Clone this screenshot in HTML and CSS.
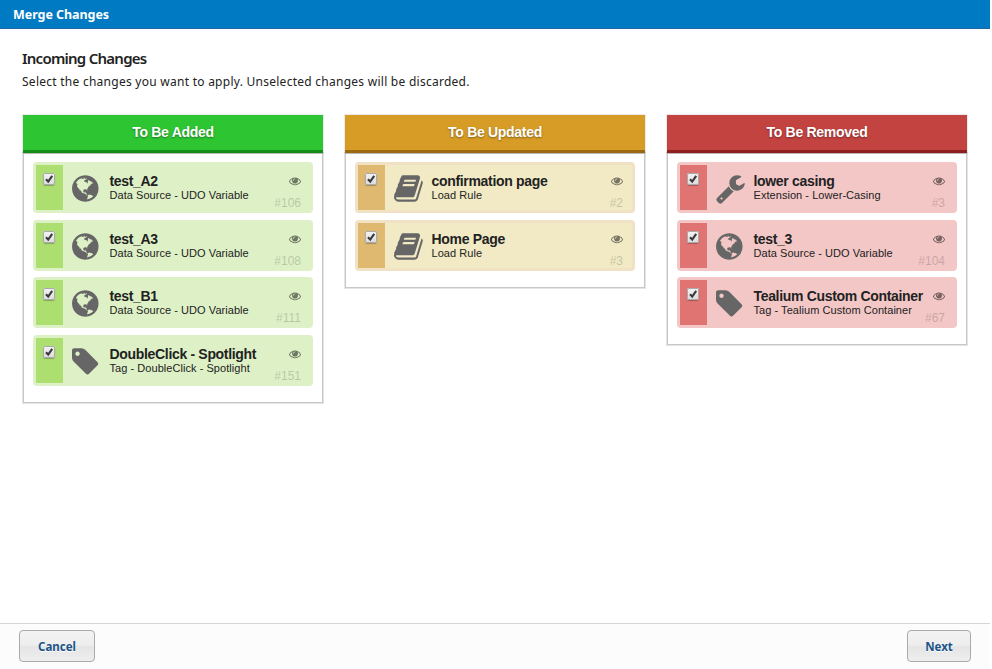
FILE: index.html
```
<!DOCTYPE html>
<html lang="en">
<head>
<meta charset="utf-8">
<title>Merge Changes</title>
<link rel="stylesheet" href="styles.css">
</head>
<body>
<svg class="sprite" width="0" height="0" aria-hidden="true">
  <symbol id="globe" viewBox="128 0 1792 1792"><path d="M896 128q209 0 385.5 103t279.5 279.5 103 385.5-103 385.5-279.5 279.5-385.5 103-385.5-103-279.5-279.5-103-385.5 103-385.5 279.5-279.5 385.5-103zm274 521q-2 1-9.5 9.5t-13.5 9.5q2 0 4.5-5t5-11 3.5-7q6-7 22-15 14-6 52-12 34-8 51 11-2-2 9.5-13t14.5-12q3-2 15-4.5t15-7.5l2-22q-12 1-17.5-7t-6.5-21q0 2-6 8 0-7-4.5-8t-11.5 1-9 1q-10-3-15-7.5t-8-16.5-4-15q-2-5-9.5-11t-9.5-10q-1-2-2.5-5.5t-3-6.5-4-5.5-5.5-2.5-7 5-7.5 10-4.5 5q-3-2-6-1.5t-4.5 1-4.5 3-5 3.5q-3 2-8.5 3t-8.5 2q15-5-1-11-10-4-16-3 9-4 7.5-12t-8.5-14h5q-1-4-8.5-8.5t-17.5-8.5-13-6q-8-5-34-9.5t-33-.5q-5 6-4.5 10.5t4 14 3.5 12.5q1 6-5.5 13t-6.5 12q0 7 14 15.5t10 21.5q-3 8-16 16t-16 12q-5 8-1.5 18.5t10.5 16.5q2 2 1.5 4t-3.5 4.5-5.5 4-6.5 3.5l-3 2q-11 5-20.5-6t-13.5-26q-7-25-16-30-23-8-29 1-5-13-41-26-25-9-58-4 6-1 0-15-7-15-19-12 3-6 4-17.5t1-13.5q3-13 12-23 1-1 7-8.5t9.5-13.5.5-6q35 4 50-11 5-5 11.5-17t10.5-17q9-6 14-5.5t14.5 5.5 14.5 5q14 1 15.5-11t-7.5-20q12 1 3-17-4-7-8-9-12-4-27 5-8 4 2 8-1-1-9.5 10.5t-16.5 17.5-16-5q-1-1-5.5-13.5t-9.5-13.5q-8 0-16 15 3-8-11-15t-24-8q19-12-8-27-7-4-20.5-5t-19.5 4q-5 7-5.5 11.5t5 8 10.5 5.5 11.5 4 8.5 3q14 10 8 14-2 1-8.5 3.5t-11.5 4.5-6 4q-3 4 0 14t-2 14q-5-5-9-17.5t-7-16.5q7 9-25 6l-10-1q-4 0-16 2t-20.5 1-13.5-8q-4-8 0-20 1-4 4-2-4-3-11-9.5t-10-8.5q-46 15-94 41 6 1 12-1 5-2 13-6.5t10-5.5q34-14 42-7l5-5q14 16 20 25-7-4-30-1-20 6-22 12 7 12 5 18-4-3-11.5-10t-14.5-11-15-5q-16 0-22 1-146 80-235 222 7 7 12 8 4 1 5 9t2.5 11 11.5-3q9 8 3 19 1-1 44 27 19 17 21 21 3 11-10 18-1-2-9-9t-9-4q-3 5 .5 18.5t10.5 12.5q-7 0-9.5 16t-2.5 35.5-1 23.5l2 1q-3 12 5.5 34.5t21.5 19.5q-13 3 20 43 6 8 8 9 3 2 12 7.5t15 10 10 10.5q4 5 10 22.5t14 23.5q-2 6 9.5 20t10.5 23q-1 0-2.5 1t-2.5 1q3 7 15.5 14t15.5 13q1 3 2 10t3 11 8 2q2-20-24-62-15-25-17-29-3-5-5.5-15.5t-4.5-14.5q2 0 6 1.5t8.5 3.5 7.5 4 2 3q-3 7 2 17.5t12 18.5 17 19 12 13q6 6 14 19.5t0 13.5q9 0 20 10.5t17 19.5q5 8 8 26t5 24q2 7 8.5 13.5t12.5 9.5l16 8 13 7q5 2 18.5 10.5t21.5 11.5q10 4 16 4t14.5-2.5 13.5-3.5q15-2 29 15t21 21q36 19 55 11-2 1 .5 7.5t8 15.5 9 14.5 5.5 8.5q5 6 18 15t18 15q6-4 7-9-3 8 7 20t18 10q14-3 14-32-31 15-49-18 0-1-2.5-5.5t-4-8.5-2.5-8.5 0-7.5 5-3q9 0 10-3.5t-2-12.5-4-13q-1-8-11-20t-12-15q-5 9-16 8t-16-9q0 1-1.5 5.5t-1.5 6.5q-13 0-15-1 1-3 2.5-17.5t3.5-22.5q1-4 5.5-12t7.5-14.5 4-12.5-4.5-9.5-17.5-2.5q-19 1-26 20-1 3-3 10.5t-5 11.5-9 7q-7 3-24 2t-24-5q-13-8-22.5-29t-9.5-37q0-10 2.5-26.5t3-25-5.5-24.5q3-2 9-9.5t10-10.5q2-1 4.5-1.5t4.5 0 4-1.5 3-6q-1-1-4-3-3-3-4-3 7 3 28.5-1.5t27.5 1.5q15 11 22-2 0-1-2.5-9.5t-.5-13.5q5 27 29 9 3 3 15.5 5t17.5 5q3 2 7 5.5t5.5 4.5 5-.5 8.5-6.5q10 14 12 24 11 40 19 44 7 3 11 2t4.5-9.5 0-14-1.5-12.5l-1-8v-18l-1-8q-15-3-18.5-12t1.5-18.5 15-18.5q1-1 8-3.5t15.5-6.5 12.5-8q21-19 15-35 7 0 11-9-1 0-5-3t-7.5-5-4.5-2q9-5 2-16 5-3 7.5-11t7.5-10q9 12 21 2 8-8 1-16 5-7 20.5-10.5t18.5-9.5q7 2 8-2t1-12 3-12q4-5 15-9t13-5l17-11q3-4 0-4 18 2 31-11 10-11-6-20 3-6-3-9.5t-15-5.5q3-1 11.5-.5t10.5-1.5q15-10-7-16-17-5-43 12zm-163 877q206-36 351-189-3-3-12.5-4.5t-12.5-3.5q-18-7-24-8 1-7-2.5-13t-8-9-12.5-8-11-7q-2-2-7-6t-7-5.5-7.5-4.5-8.5-2-10 1l-3 1q-3 1-5.5 2.5t-5.5 3-4 3 0 2.5q-21-17-36-22-5-1-11-5.5t-10.5-7-10-1.5-11.5 7q-5 5-6 15t-2 13q-7-5 0-17.5t2-18.5q-3-6-10.5-4.5t-12 4.500-11.500 8.500-9 6.500-8.500 5.500-8.500 7.500q-3 4-6 12t-5 11q-2-4-11.500-6.500t-9.500-5.500q2 10 4 35t5 38q7 31-12 48-27 25-29 40-4 22 12 26 0 7-8 20.500t-7 21.500q0 6 2 16z"/></symbol>
  <symbol id="tag" viewBox="128 0 1792 1792"><path d="M576 448q0-53-37.500-90.500t-90.500-37.500-90.500 37.500-37.500 90.500 37.500 90.500 90.500 37.500 90.500-37.500 37.500-90.500zm1067 576q0 53-37 90l-491 492q-39 37-91 37-53 0-90-37l-715-716q-38-37-64.500-101t-26.500-117v-416q0-52 38-90t90-38h416q53 0 117 26.500t102 64.500l715 714q37 39 37 91z"/></symbol>
  <symbol id="book" viewBox="64 0 1792 1792"><path d="M1703 478q40 57 18 129l-275 906q-19 64-76.500 107.500t-122.500 43.500h-923q-77 0-148.500-53.500t-99.500-131.500q-24-67-2-127 0-4 3-27t4-37q1-8-3-21.500t-3-19.500q2-11 8-21t16.500-23.500 16.500-23.500q23-38 45-91.500t30-91.500q3-10 .5-30t-.5-28q3-11 17-28t17-23q21-36 42-92t25-90q1-9-2.500-32t.5-28q4-13 22-30.500t22-22.500q19-26 42.500-84.500t27.500-96.500q1-8-3-25.500t-2-26.500q2-8 9-18t18-23 17-21q8-12 16.500-30.500t15-35 16-36 19.500-32 26.500-23.500 36-11.500 47.500 5.500l-1 3q38-9 51-9h761q74 0 114 56t18 130l-274 906q-36 119-71.500 153.500t-128.500 34.500h-869q-27 0-38 15-11 16-1 43 24 70 144 70h923q29 0 56-15.500t35-41.500l300-987q7-22 5-57 38 15 59 43zm-1064 2q-4 13 2 22.500t20 9.500h608q13 0 25.500-9.500t16.500-22.500l21-64q4-13-2-22.500t-20-9.500h-608q-13 0-25.500 9.500t-16.500 22.500zm-83 256q-4 13 2 22.500t20 9.500h608q13 0 25.500-9.500t16.500-22.500l21-64q4-13-2-22.500t-20-9.500h-608q-13 0-25.500 9.500t-16.500 22.500z"/></symbol>
  <symbol id="wrench" viewBox="64 0 1792 1792"><path d="M448 1472q0-26-19-45t-45-19-45 19-19 45 19 45 45 19 45-19 19-45zm644-420l-682 682q-37 37-90 37-52 0-91-37l-106-108q-38-36-38-90 0-53 38-91l681-681q39 98 114.500 173.500t173.500 114.500zm634-435q0 39-23 106-47 134-164.500 217.500t-258.500 83.500q-185 0-316.500-131.500t-131.500-316.500 131.500-316.500 316.500-131.500q58 0 121.500 16.500t107.500 46.500q16 11 16 28t-16 28l-293 169v224l193 107q5-3 79-48.500t135.500-81 70.500-35.500q15 0 23.500 10t8.500 25z"/></symbol>
  <symbol id="eye" viewBox="0 0 1792 1792"><path d="M1664 960q-152-236-381-353 61 104 61 225 0 185-131.500 316.500t-316.500 131.500-316.500-131.500-131.500-316.500q0-121 61-225-229 117-381 353 133 205 333.500 326.500t434.500 121.500 434.500-121.500 333.500-326.500zm-720-384q0-20-14-34t-34-14q-125 0-214.500 89.500t-89.500 214.500q0 20 14 34t34 14 34-14 14-34q0-86 61-147t147-61q20 0 34-14t14-34zm848 384q0 34-20 69-140 230-376.500 368.500t-499.500 138.500-499.500-139-376.500-368q-20-35-20-69t20-69q140-229 376.500-368t499.500-139 499.500 139 376.500 368q20 35 20 69z"/></symbol>
  <symbol id="check" viewBox="0 0 12 12"><path d="M3 6.300 5.200 8.600 9.200 2.900" fill="none" stroke="#3a3a3a" stroke-width="2.100"/></symbol>
</svg>
<div class="dialog">
  <header class="titlebar"><span>Merge Changes</span></header>
  <main class="content">
    <h1><span>Incoming Changes</span></h1>
    <p class="intro"><span>Select the changes you want to apply. Unselected changes will be discarded.</span></p>
    <div class="columns">
      <section class="column added">
        <h2><span>To Be Added</span></h2>
        <div class="list">
          <article class="card"><div class="pick"><svg class="box"><use href="#check"/></svg></div><svg class="icon"><use href="#globe"/></svg><div class="text"><b>test_A2</b><small>Data Source - UDO Variable</small></div><div class="meta"><svg class="eye"><use href="#eye"/></svg><i>#106</i></div></article>
          <article class="card"><div class="pick"><svg class="box"><use href="#check"/></svg></div><svg class="icon"><use href="#globe"/></svg><div class="text"><b>test_A3</b><small>Data Source - UDO Variable</small></div><div class="meta"><svg class="eye"><use href="#eye"/></svg><i>#108</i></div></article>
          <article class="card"><div class="pick"><svg class="box"><use href="#check"/></svg></div><svg class="icon"><use href="#globe"/></svg><div class="text"><b>test_B1</b><small>Data Source - UDO Variable</small></div><div class="meta"><svg class="eye"><use href="#eye"/></svg><i>#111</i></div></article>
          <article class="card"><div class="pick"><svg class="box"><use href="#check"/></svg></div><svg class="icon"><use href="#tag"/></svg><div class="text"><b>DoubleClick - Spotlight</b><small>Tag - DoubleClick - Spotlight</small></div><div class="meta"><svg class="eye"><use href="#eye"/></svg><i>#151</i></div></article>
        </div>
      </section>
      <section class="column updated">
        <h2><span>To Be Updated</span></h2>
        <div class="list">
          <article class="card"><div class="pick"><svg class="box"><use href="#check"/></svg></div><svg class="icon"><use href="#book"/></svg><div class="text"><b>confirmation page</b><small>Load Rule</small></div><div class="meta"><svg class="eye"><use href="#eye"/></svg><i>#2</i></div></article>
          <article class="card"><div class="pick"><svg class="box"><use href="#check"/></svg></div><svg class="icon"><use href="#book"/></svg><div class="text"><b>Home Page</b><small>Load Rule</small></div><div class="meta"><svg class="eye"><use href="#eye"/></svg><i>#3</i></div></article>
        </div>
      </section>
      <section class="column removed">
        <h2><span>To Be Removed</span></h2>
        <div class="list">
          <article class="card"><div class="pick"><svg class="box"><use href="#check"/></svg></div><svg class="icon"><use href="#wrench"/></svg><div class="text"><b>lower casing</b><small>Extension - Lower-Casing</small></div><div class="meta"><svg class="eye"><use href="#eye"/></svg><i>#3</i></div></article>
          <article class="card"><div class="pick"><svg class="box"><use href="#check"/></svg></div><svg class="icon"><use href="#globe"/></svg><div class="text"><b>test_3</b><small>Data Source - UDO Variable</small></div><div class="meta"><svg class="eye"><use href="#eye"/></svg><i>#104</i></div></article>
          <article class="card"><div class="pick"><svg class="box"><use href="#check"/></svg></div><svg class="icon"><use href="#tag"/></svg><div class="text"><b>Tealium Custom Container</b><small>Tag - Tealium Custom Container</small></div><div class="meta"><svg class="eye"><use href="#eye"/></svg><i>#67</i></div></article>
        </div>
      </section>
    </div>
  </main>
  <footer class="footer"><button class="cancel">Cancel</button><button class="next">Next</button></footer>
</div>
</body>
</html>
```
FILE: styles.css
```
* { box-sizing: border-box; }
body { margin: 0; background: #fff; color: #222; font-family: "Liberation Sans", Arial, sans-serif; overflow: hidden; }
.sprite { display: none; }
.dialog { width: 990px; height: 669px; display: flex; flex-direction: column; background: #fff; }
.titlebar { height: 29px; flex: none; padding-left: 13px; background: #007ac3; border-bottom: 1px solid #2266a6; color: #fff; font: bold 12.5px/29px "Noto Sans", sans-serif; letter-spacing: -0.05px; }
.content { flex: 1; padding: 19px 23px 0 22px; }
h1 { margin: 0; font: 600 15px/20px "Noto Sans", sans-serif; letter-spacing: -0.75px; color: #222; }
.intro { margin: 4px 0 0; font: 12px/20px "Noto Sans", sans-serif; letter-spacing: 0.26px; color: #222; }
.columns { display: flex; align-items: flex-start; gap: 22px; padding: 23px 0 0 1px; }
.column { width: 300px; flex: none; }
h2 { position: relative; margin: 0; height: 38px; border-bottom: 3px solid; text-align: center; color: #fff; font: bold 14px/35px "Liberation Sans", sans-serif; letter-spacing: -0.3px; text-shadow: 0 1px 2px rgba(0,0,0,.4); box-shadow: 0 0 0 1px rgba(0,0,0,.08); }
.added h2 { background: #2dc532; border-color: #148e18; }
.updated h2 { background: #d69c26; border-color: #9b6a10; }
.removed h2 { background: #c34341; border-color: #8f1f1f; }
.list { border: 1px solid #c8c8c8; box-shadow: 0 0 0 1px #e4e4e4; padding: 8.300px 9px 15.700px; display: flex; flex-direction: column; gap: 6.600px; }
.card { height: 51px; border: 3px solid; border-radius: 4px; display: flex; }
.added .card { background: #def1c6; border-color: #def1c6; }
.updated .card { background: #f1eac5; border-color: #f1e2c5; }
.removed .card { background: #f3c7c6; border-color: #f3c7c6; }
.pick { width: 27px; flex: none; padding: 7.800px 0 0 7px; }
.added .pick { background: #addf70; }
.updated .pick { background: #dfb970; }
.removed .pick { background: #e07473; }
.box { display: block; width: 12px; height: 12px; border-radius: 2px; background: linear-gradient(#f4f4f4, #dcdcdc); box-shadow: inset 0 0 0 1px #aaa, 0 1px 1px rgba(0,0,0,.25); }
.icon { width: 31px; height: 31px; flex: none; margin: 7.800px 0 0 9px; fill: #666; }
.text { width: 150px; margin: 8.800px 0 0 6.500px; white-space: nowrap; }
.text b { display: block; font-size: 14px; line-height: 15px; letter-spacing: -0.32px; color: #222; }
.text small { display: block; font-size: 11px; line-height: 12px; letter-spacing: 0.05px; color: #222; }
.meta { flex: 1; display: flex; flex-direction: column; align-items: flex-end; padding: 9.800px 9px 0 0; }
.eye { width: 12px; height: 12px; flex: none; fill: #000; opacity: .5; }
.meta i { font: normal 12px/14px "Liberation Sans", sans-serif; color: #000; opacity: .17; margin-top: 9px; }
.footer { height: 46px; flex: none; border-top: 1px solid #d5d5d5; background: #fcfcfc; display: flex; justify-content: space-between; padding: 6px 19px 0; }
button { height: 32px; padding: 1px 0 0; border: 1px solid #aaa; border-radius: 4px; background: linear-gradient(#f3f3f3, #ededed 50%, #e5e5e5 51%, #eee); color: #1b5489; font: bold 11.500px/29px "Noto Sans", sans-serif; text-shadow: 0 1px 0 #fff; }
.cancel { width: 76px; }
.next { width: 64px; }
```
